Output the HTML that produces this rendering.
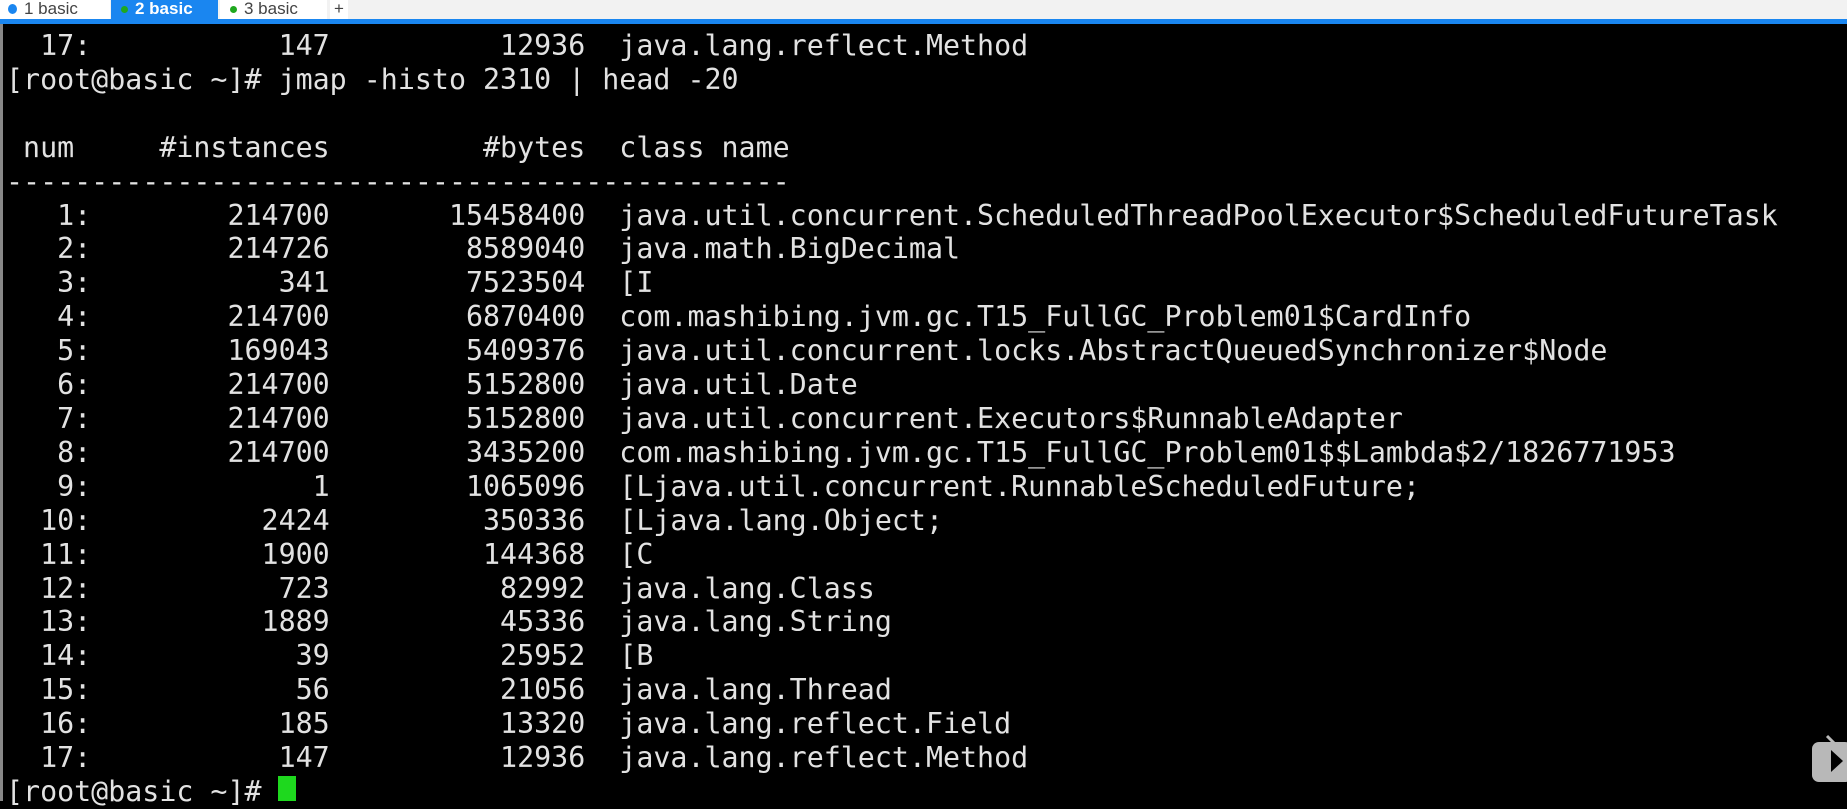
<!DOCTYPE html>
<html><head><meta charset="utf-8"><style>
html,body{margin:0;padding:0;width:1847px;height:801px;overflow:hidden;background:#000}
.bar{position:absolute;left:0;top:0;width:1847px;height:19px;background:#f2f2f2}
.line{position:absolute;left:0;top:19px;width:1847px;height:5px;background:#1a86f0}
.tab{position:absolute;top:0;height:19px;font:17px "Liberation Sans",sans-serif;line-height:17px;color:#444;background:#fff;white-space:nowrap}
.tab .d{display:inline-block;width:7px;height:7px;border-radius:50%;background:#1fa81f;margin:0 7px 1px 10px;vertical-align:middle}
.term{position:absolute;left:0;top:24px;width:1847px;height:777px;background:#000;border-left:3px solid #888;box-sizing:border-box}
pre{position:absolute;left:3px;top:5px;margin:0;font:28.3px "DejaVu Sans Mono","Liberation Mono",monospace;line-height:33.9px;color:#e2e2e2}
.cur{position:absolute;left:278px;top:776px;width:18px;height:25px;background:#1ed81e}
</style></head><body>
<div class="bar"></div>
<div class="tab" style="left:0;width:110px"><span class="d" style="background:#1a86f0;width:9px;height:10px;margin-left:8px"></span>1 basic</div>
<div class="tab" style="left:111px;width:107px;background:#1a86f0;color:#fff;font-weight:bold"><span class="d"></span>2 basic</div>
<div class="tab" style="left:220px;width:107px"><span class="d"></span>3 basic</div>
<div class="tab" style="left:330px;width:18px;text-align:center">+</div>
<div class="line"></div>
<div class="term"><pre>  17:           147          12936  java.lang.reflect.Method
[root@basic ~]# jmap -histo 2310 | head -20

 num     #instances         #bytes  class name
----------------------------------------------
   1:        214700       15458400  java.util.concurrent.ScheduledThreadPoolExecutor$ScheduledFutureTask
   2:        214726        8589040  java.math.BigDecimal
   3:           341        7523504  [I
   4:        214700        6870400  com.mashibing.jvm.gc.T15_FullGC_Problem01$CardInfo
   5:        169043        5409376  java.util.concurrent.locks.AbstractQueuedSynchronizer$Node
   6:        214700        5152800  java.util.Date
   7:        214700        5152800  java.util.concurrent.Executors$RunnableAdapter
   8:        214700        3435200  com.mashibing.jvm.gc.T15_FullGC_Problem01$$Lambda$2/1826771953
   9:             1        1065096  [Ljava.util.concurrent.RunnableScheduledFuture;
  10:          2424         350336  [Ljava.lang.Object;
  11:          1900         144368  [C
  12:           723          82992  java.lang.Class
  13:          1889          45336  java.lang.String
  14:            39          25952  [B
  15:            56          21056  java.lang.Thread
  16:           185          13320  java.lang.reflect.Field
  17:           147          12936  java.lang.reflect.Method
[root@basic ~]# </pre></div>
<div class="cur"></div>
<svg style="position:absolute;left:1810px;top:734px" width="37" height="54" viewBox="0 0 37 54"><line x1="17" y1="2" x2="24" y2="9" stroke="#bbb" stroke-width="3"/><rect x="2" y="8" width="40" height="40" rx="7" fill="#b8b8b8"/><path d="M21 16 L33 27 L21 38 Z" fill="#000"/></svg>
</body></html>
